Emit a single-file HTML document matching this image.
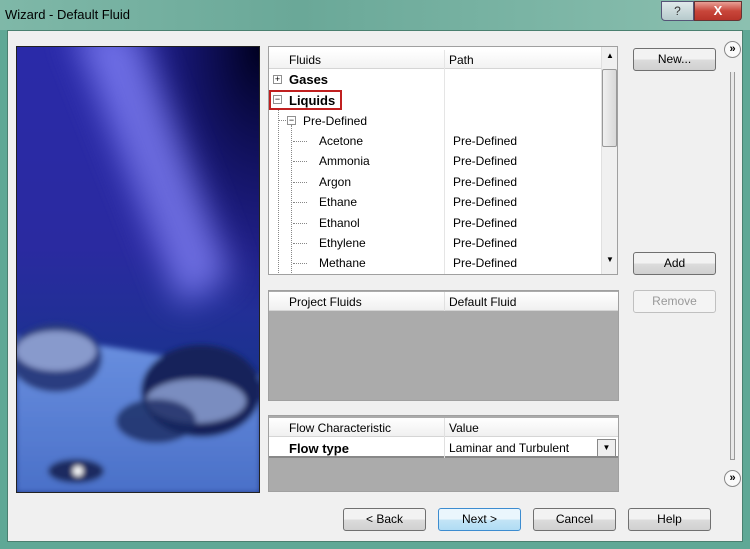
<!DOCTYPE html>
<html><head><style>
*{box-sizing:border-box;margin:0;padding:0}
body{width:750px;height:549px;overflow:hidden;font-family:"Liberation Sans",sans-serif;font-size:12px;color:#000;background:#5fa896;position:relative}
.abs{position:absolute}
#title{left:0;top:0;width:750px;height:30px;background:linear-gradient(90deg,#7fb8a8,#6aa898 40%,#7ab4a4 70%,#8cc0b0);}
#client{left:7px;top:30px;width:736px;height:512px;background:#f0f0f0;border:1px solid #4a8070}
.panel{background:#fff;border:1px solid #a0a0a0}
.hdr{position:absolute;left:0;right:0;height:19px;background:linear-gradient(#fff,#f2f2f2);border-bottom:1px solid #d5d5d5}
.t{position:absolute;white-space:nowrap;font-size:12px}
.btn{position:absolute;height:23px;border:1px solid #707070;border-radius:3px;background:linear-gradient(#f2f2f2 50%,#dcdcdc 50%,#d0d0d0);text-align:center;line-height:21px;font-size:12px}
.pm{position:absolute;width:9px;height:9px;border:1px solid #909090;background:#fff;font-size:9px;line-height:7px;text-align:center}
.dot{position:absolute;border-top:1px dotted #888;width:14px}
.circ{position:absolute;width:17px;height:17px;border:1px solid #888;border-radius:50%;background:#fafafa;font-size:11px;line-height:14px;text-align:center;font-weight:bold}
</style></head><body>
<div id="title" class="abs"></div>
<div class="t" style="left:5px;top:7px;font-size:13px">Wizard - Default Fluid</div>
<div class="abs" style="left:661px;top:1px;width:33px;height:20px;border:1px solid #557;border-radius:0 0 0 4px;background:linear-gradient(#dfe9ea,#b6cacc);text-align:center;font-size:12px;line-height:18px;color:#333">?</div>
<div class="abs" style="left:694px;top:1px;width:48px;height:20px;border:1px solid #633;border-radius:0 0 4px 0;background:linear-gradient(#e8a096,#c8463a 50%,#b8342a);text-align:center;font-size:13px;line-height:18px;color:#fff;font-weight:bold">X</div>
<div id="client" class="abs"></div>

<svg class="abs" style="left:16px;top:46px" width="244" height="447" viewBox="0 0 244 447">
<defs>
<linearGradient id="bg" x1="0" y1="0" x2="0" y2="1">
<stop offset="0" stop-color="#2a2aa8"/><stop offset=".45" stop-color="#2a2aa0"/><stop offset=".7" stop-color="#1c3290"/><stop offset="1" stop-color="#183080"/></linearGradient>
<radialGradient id="dk" cx="1" cy="0" r=".6"><stop offset="0" stop-color="#000020"/><stop offset="1" stop-color="#000040" stop-opacity="0"/></radialGradient>
<filter id="bl" x="-100%" y="-100%" width="300%" height="300%"><feGaussianBlur stdDeviation="16"/></filter>
<filter id="bl2" x="-50%" y="-50%" width="200%" height="200%"><feGaussianBlur stdDeviation="3"/></filter>
<linearGradient id="sf" x1="0" y1="0" x2="0" y2="1"><stop offset="0" stop-color="#6a90e0"/><stop offset="1" stop-color="#4a70c8"/></linearGradient>
</defs>
<rect width="244" height="447" fill="url(#bg)"/>
<rect width="244" height="447" fill="url(#dk)"/>
<path d="M55 -20 L120 -20 L215 230 L165 260 Z" fill="#8a8aff" opacity=".7" filter="url(#bl)"/>
<g filter="url(#bl2)">
<path d="M0 370 L0 290 Q120 300 244 330 L244 447 L0 447 Z" fill="url(#sf)"/>
<ellipse cx="40" cy="312" rx="46" ry="34" fill="#2a3c80"/>
<ellipse cx="40" cy="305" rx="40" ry="20" fill="#c8d8ff" opacity=".6"/>
<ellipse cx="185" cy="345" rx="60" ry="46" fill="#14205a"/>
<ellipse cx="180" cy="355" rx="50" ry="22" fill="#b0c8f8" opacity=".65"/>
<ellipse cx="140" cy="375" rx="40" ry="22" fill="#1a2a60" opacity=".8"/>
<ellipse cx="60" cy="425" rx="28" ry="12" fill="#1a2a60"/>
<circle cx="62" cy="425" r="5" fill="#fff"/>
</g>
<rect x=".5" y=".5" width="243" height="446" fill="none" stroke="#222"/>
</svg>

<div class="abs panel" style="left:268px;top:46px;width:350px;height:229px;overflow:hidden">
<div class="hdr" style="top:3px;width:332px"></div>
<div class="t" style="left:20px;top:6px">Fluids</div>
<div class="abs" style="left:175px;top:3px;height:225px;border-left:1px solid #e5e5e5"></div>
<div class="t" style="left:180px;top:6px">Path</div>
<div class="abs" style="left:332px;top:0;width:17px;height:228px;background:#f0f0f0;border-left:1px solid #e0e0e0"></div>
<div class="t" style="left:337px;top:4px;font-size:8px">▲</div>
<div class="abs" style="left:333px;top:22px;width:15px;height:78px;border:1px solid #999;border-radius:2px;background:linear-gradient(90deg,#f0f0f0,#d8d8d8)"></div>
<div class="t" style="left:337px;top:208px;font-size:8px">▼</div>
<div class="pm" style="left:4px;top:28px">+</div><div class="t" style="left:20px;top:25px;font-weight:bold;font-size:13px">Gases</div>
<div class="pm" style="left:4px;top:48px">−</div><div class="t" style="left:20px;top:46px;font-weight:bold;font-size:13px">Liquids</div>
<div class="abs" style="left:0;top:43px;width:73px;height:20px;border:2px solid #c02020"></div>
<div class="abs" style="left:9px;top:63px;height:165px;border-left:1px dotted #888"></div>
<div class="dot" style="left:9px;top:73px;width:10px"></div>
<div class="pm" style="left:18px;top:69px">−</div><div class="t" style="left:34px;top:67px">Pre-Defined</div>
<div class="abs" style="left:22px;top:78px;height:150px;border-left:1px dotted #888"></div>
<div class="dot" style="left:24px;top:94px"></div><div class="t" style="left:50px;top:87px">Acetone</div><div class="t" style="left:184px;top:87px">Pre-Defined</div>
<div class="dot" style="left:24px;top:114px"></div><div class="t" style="left:50px;top:107px">Ammonia</div><div class="t" style="left:184px;top:107px">Pre-Defined</div>
<div class="dot" style="left:24px;top:135px"></div><div class="t" style="left:50px;top:128px">Argon</div><div class="t" style="left:184px;top:128px">Pre-Defined</div>
<div class="dot" style="left:24px;top:155px"></div><div class="t" style="left:50px;top:148px">Ethane</div><div class="t" style="left:184px;top:148px">Pre-Defined</div>
<div class="dot" style="left:24px;top:176px"></div><div class="t" style="left:50px;top:169px">Ethanol</div><div class="t" style="left:184px;top:169px">Pre-Defined</div>
<div class="dot" style="left:24px;top:196px"></div><div class="t" style="left:50px;top:189px">Ethylene</div><div class="t" style="left:184px;top:189px">Pre-Defined</div>
<div class="dot" style="left:24px;top:216px"></div><div class="t" style="left:50px;top:209px">Methane</div><div class="t" style="left:184px;top:209px">Pre-Defined</div>
</div>

<div class="abs panel" style="left:268px;top:290px;width:351px;height:111px;background:#ababab">
<div class="hdr" style="top:1px;background:linear-gradient(#fff,#f0f0f0)"></div>
<div class="abs" style="left:175px;top:1px;height:19px;border-left:1px solid #e0e0e0"></div>
<div class="t" style="left:20px;top:4px">Project Fluids</div><div class="t" style="left:180px;top:4px">Default Fluid</div>
</div>

<div class="abs panel" style="left:268px;top:415px;width:351px;height:77px;background:#ababab">
<div class="hdr" style="top:2px;background:linear-gradient(#fff,#f0f0f0)"></div>
<div class="abs" style="left:0;top:21px;width:349px;height:21px;background:#fff;border-bottom:2px solid #888"></div>
<div class="abs" style="left:175px;top:2px;height:40px;border-left:1px solid #e0e0e0"></div>
<div class="t" style="left:20px;top:5px">Flow Characteristic</div><div class="t" style="left:180px;top:5px">Value</div>
<div class="t" style="left:20px;top:25px;font-weight:bold;font-size:13px">Flow type</div><div class="t" style="left:180px;top:25px">Laminar and Turbulent</div>
<div class="abs" style="left:328px;top:23px;width:19px;height:18px;border:1px solid #888;background:#eee;font-size:8px;text-align:center;line-height:16px">▼</div>
</div>

<div class="btn" style="left:633px;top:48px;width:83px">New...</div>
<div class="btn" style="left:633px;top:252px;width:83px">Add</div>
<div class="btn" style="left:633px;top:290px;width:83px;color:#999;border-color:#c0c0c0;background:#f4f4f4">Remove</div>
<div class="btn" style="left:343px;top:508px;width:83px">&lt; Back</div>
<div class="btn" style="left:438px;top:508px;width:83px;border-color:#3c8cd0;background:linear-gradient(#eaf6fd 50%,#c4e5f6 50%,#b0dcf4)">Next &gt;</div>
<div class="btn" style="left:533px;top:508px;width:83px">Cancel</div>
<div class="btn" style="left:628px;top:508px;width:83px">Help</div>

<div class="abs" style="left:730px;top:72px;width:5px;height:388px;border:1px solid #999;border-top:none;background:#e8e8e8"></div>
<div class="circ" style="left:724px;top:41px">»</div>
<div class="circ" style="left:724px;top:470px">»</div>
</body></html>
